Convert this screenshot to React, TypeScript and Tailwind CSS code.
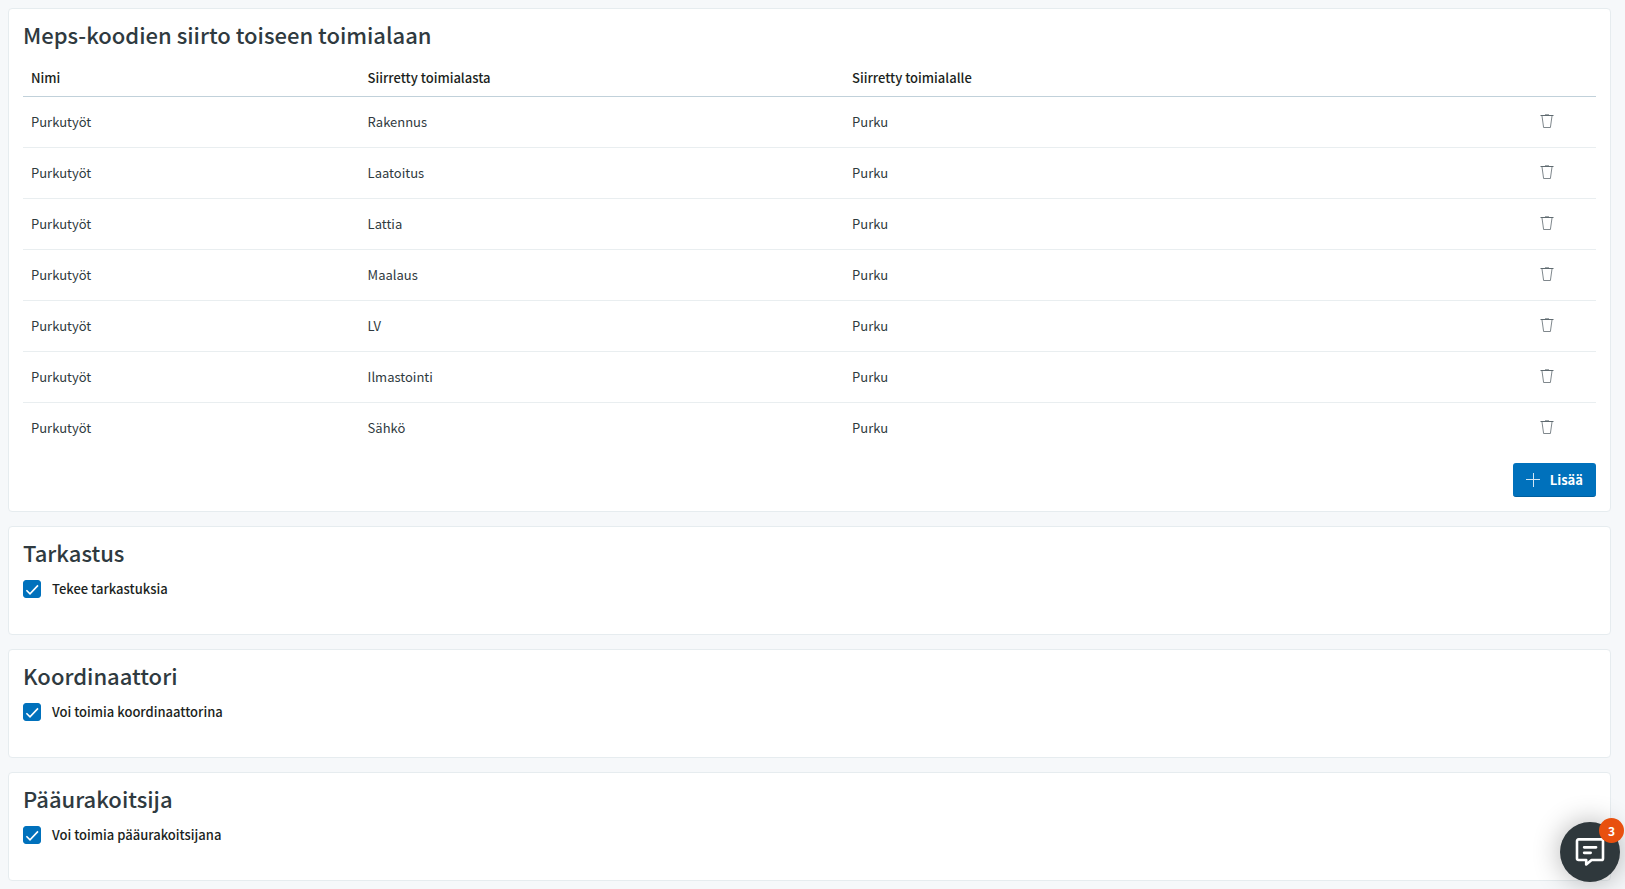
import React, { useState } from "react";

interface Transfer {
  id: number;
  name: string;
  from: string;
  to: string;
}

const initialTransfers: Transfer[] = [
  { id: 1, name: "Purkutyöt", from: "Rakennus", to: "Purku" },
  { id: 2, name: "Purkutyöt", from: "Laatoitus", to: "Purku" },
  { id: 3, name: "Purkutyöt", from: "Lattia", to: "Purku" },
  { id: 4, name: "Purkutyöt", from: "Maalaus", to: "Purku" },
  { id: 5, name: "Purkutyöt", from: "LV", to: "Purku" },
  { id: 6, name: "Purkutyöt", from: "Ilmastointi", to: "Purku" },
  { id: 7, name: "Purkutyöt", from: "Sähkö", to: "Purku" },
];

const TrashIcon = () => (
  <svg width="14" height="16" viewBox="0 0 14 16" fill="none" stroke="#5f6a70">
    <path d="M0.5 2.5H13.5" />
    <path d="M5 1.5H9" strokeOpacity="0.6" />
    <path d="M2 3L3.6 14.5H10.4L12 3" strokeWidth="0.8" />
  </svg>
);

const PlusIcon = () => (
  <svg width="14" height="14" viewBox="0 0 14 14" fill="none" stroke="#d3e6f4">
    <path d="M0 6.5H14M7.5 0V14" />
  </svg>
);

const ChatIcon = () => (
  <svg width="30" height="30" viewBox="0 0 30 30" fill="none" stroke="white">
    <path
      d="M3.6 2.4H26.4Q28 2.4 28 4V21.4Q28 23 26.4 23H16.6L11.2 27.4V23H3.6Q2 23 2 21.4V4Q2 2.4 3.6 2.4Z"
      strokeWidth="2.6"
      strokeLinejoin="round"
    />
    <path d="M9.2 10.3H21M9.2 15.8H15.6" strokeWidth="2.8" strokeLinecap="round" />
  </svg>
);

const Panel = ({
  title,
  children,
}: {
  title: string;
  children: React.ReactNode;
}) => (
  <section className="rounded-sm border border-[#e6ecef] bg-white p-3.5">
    <h2 className="text-[22px] leading-[22px] font-medium text-[#2f3a40]">
      {title}
    </h2>
    {children}
  </section>
);

const CheckField = ({ id, label }: { id: string; label: string }) => {
  const [checked, setChecked] = useState(true);

  return (
    <div className="mt-4 mb-[21px] flex items-center gap-[11px]">
      <span className="relative flex size-[18px]">
        <input
          id={id}
          type="checkbox"
          checked={checked}
          onChange={(e) => setChecked(e.target.checked)}
          className="size-[18px] appearance-none rounded-[3px] border border-[#0071bc] checked:bg-[#0071bc]"
        />
        {checked && (
          <svg
            viewBox="0 0 18 18"
            className="pointer-events-none absolute inset-0"
            fill="none"
            stroke="white"
            strokeWidth="1.6"
          >
            <path d="M3.4 10.2L7 13.8L15 5.4" />
          </svg>
        )}
      </span>
      <label htmlFor={id} className="text-[13px] leading-5 font-medium text-[#1b1f21]">
        {label}
      </label>
    </div>
  );
};

const App = () => {
  const [transfers, setTransfers] = useState<Transfer[]>(initialTransfers);

  const handleRemove = (id: number) => {
    setTransfers(transfers.filter((t) => t.id !== id));
  };

  const handleAdd = () => {
    setTransfers([
      ...transfers,
      { id: Date.now(), name: "Purkutyöt", from: "Rakennus", to: "Purku" },
    ]);
  };

  return (
    <div className="min-h-screen bg-[#f6f8fa] pt-2 pr-3.5 pl-2 font-['Noto_Sans_CJK_JP',sans-serif] text-[13px] text-[#2f3a40]">
      <main className="flex flex-col gap-3.5">
        <Panel title="Meps-koodien siirto toiseen toimialaan">
          <table className="mt-[7px] w-full table-fixed border-collapse text-left">
            <thead>
              <tr className="h-11 border-b border-[#c1d1da] text-[#1b1f21]">
                <th className="w-[21.4%] px-2 pt-2 font-medium">Nimi</th>
                <th className="w-[30.8%] px-2 pt-2 font-medium">Siirretty toimialasta</th>
                <th className="w-[30.8%] px-2 pt-2 font-medium">Siirretty toimialalle</th>
                <th></th>
              </tr>
            </thead>
            <tbody>
              {transfers.map((t) => (
                <tr
                  key={t.id}
                  className="h-[51px] border-b border-[#e9eef0] first:shadow-[inset_0_1px_0_#e3eaee] last:border-b-0"
                >
                  <td className="px-2">{t.name}</td>
                  <td className="px-2">{t.from}</td>
                  <td className="px-2">{t.to}</td>
                  <td className="pr-[42px] pb-0.5">
                    <button
                      type="button"
                      aria-label="Poista"
                      onClick={() => handleRemove(t.id)}
                      className="ml-auto block cursor-pointer"
                    >
                      <TrashIcon />
                    </button>
                  </td>
                </tr>
              ))}
            </tbody>
          </table>
          <div className="mt-2.5 flex justify-end">
            <button
              type="button"
              onClick={handleAdd}
              className="flex h-[34px] cursor-pointer items-center gap-2.5 rounded-[3px] border-b border-[#005f9e] bg-[#0071bc] px-[13px] font-bold text-white"
            >
              <PlusIcon />
              Lisää
            </button>
          </div>
        </Panel>

        <Panel title="Tarkastus">
          <CheckField id="inspections" label="Tekee tarkastuksia" />
        </Panel>
        <Panel title="Koordinaattori">
          <CheckField id="coordinator" label="Voi toimia koordinaattorina" />
        </Panel>
        <Panel title="Pääurakoitsija">
          <CheckField id="contractor" label="Voi toimia pääurakoitsijana" />
        </Panel>
      </main>

      <button
        type="button"
        aria-label="Chat"
        className="fixed right-[5px] bottom-[7px] flex size-[60px] cursor-pointer items-center justify-center rounded-full bg-[#2f383c] shadow-[0_0_28px_rgba(0,0,0,0.3)]"
      >
        <ChatIcon />
        <span className="absolute -top-1 -right-1 flex size-[25px] items-center justify-center rounded-full bg-[#e8500f] text-xs font-bold text-white">
          3
        </span>
      </button>
    </div>
  );
};

export default App;
